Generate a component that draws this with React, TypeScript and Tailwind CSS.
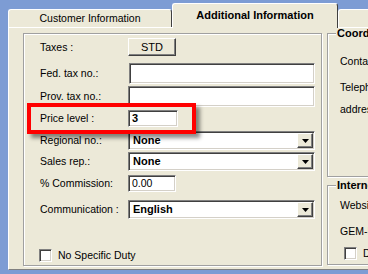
import React from 'react';

const sunken =
  'border border-t-[#808080] border-l-[#808080] border-r-white border-b-white shadow-[inset_1px_1px_0_#404040,inset_-1px_-1px_0_#d4d0c8] bg-white';
const raised =
  'border border-t-white border-l-white border-r-[#404040] border-b-[#404040] shadow-[inset_-1px_-1px_0_#808080] bg-[#ece9d8]';
const groupBox =
  'relative border border-[#a0a0a0] shadow-[inset_1px_1px_0_#ffffff,1px_1px_0_#ffffff]';

function Select({ value }: { value: string }) {
  return (
    <div className={`${sunken} w-[187px] h-[19px] flex items-center pl-[4px] pr-[1px]`}>
      <span className="flex-1 font-bold text-[11px]">{value}</span>
      <div className={`${raised} w-[16px] h-[15px] flex items-center justify-center`}>
        <svg width="7" height="4" viewBox="0 0 7 4">
          <path d="M0 0h7L3.5 4z" fill="#000" />
        </svg>
      </div>
    </div>
  );
}

function Row({ label, mt, children }: { label: string; mt: string; children: React.ReactNode }) {
  return (
    <div className={`flex items-center ${mt}`}>
      <span className="w-[88px] shrink-0">{label}</span>
      {children}
    </div>
  );
}

// Customer card - "Additional Information" tab with price level highlighted
export default function App() {
  return (
    <div className="relative w-[368px] h-[274px] overflow-hidden bg-[#7d9cd4] pl-[8px] pt-[3px] text-[10.5px] leading-none text-black font-['Liberation_Sans',Arial,sans-serif]">
      <div className="flex flex-col h-[267px] w-[400px]">
        {/* tabs */}
        <div className="flex items-end h-[24px]">
          <div className="w-[164px] h-[18px] bg-[#ece9d8] border-t border-l border-white border-r border-r-[#404040] rounded-t-[3px] flex items-center justify-center">
            Customer Information
          </div>
          <div className="relative z-10 -mb-px w-[166px] h-[25px] bg-[#ece9d8] border-t border-l border-white border-r border-r-[#404040] rounded-t-[3px] flex items-center justify-center pb-[2px] font-bold text-[11px]">
            Additional Information
          </div>
          <div className="flex-1 h-[18px] bg-[#ece9d8] border-t border-l border-white rounded-tl-[3px]" />
        </div>

        {/* panel */}
        <div className="flex-1 flex gap-[5px] bg-[#ece9d8] border-t border-l border-white border-b border-b-[#808080] pl-[14px] pt-[5px]">
          <div className={`${groupBox} w-[299px] h-[233px] shrink-0 pl-[16px]`}>
            <Row label="Taxes :" mt="mt-[4px]">
              <div className={`${raised} w-[48px] h-[18px] flex items-center justify-center text-[11px]`}>STD</div>
            </Row>
            <Row label="Fed. tax no.:" mt="mt-[7px]">
              <div className={`${sunken} ml-px w-[186px] h-[21px]`} />
            </Row>
            <Row label="Prov. tax no.:" mt="mt-[2px]">
              <div className={`${sunken} w-[187px] h-[21px]`} />
            </Row>
            <Row label="Price level :" mt="mt-[3px]">
              <div className={`${sunken} w-[50px] h-[17px] flex items-center pl-[3px] font-bold text-[11px]`}>3</div>
            </Row>
            <Row label="Regional no.:" mt="mt-[4px]">
              <Select value="None" />
            </Row>
            <Row label="Sales rep.:" mt="mt-[2px]">
              <Select value="None" />
            </Row>
            <Row label="% Commission:" mt="mt-[4px]">
              <div className={`${sunken} w-[48px] h-[17px] flex items-center pl-[3px]`}>0.00</div>
            </Row>
            <Row label="Communication :" mt="mt-[8px]">
              <Select value="English" />
            </Row>
            <div className="flex items-center gap-[6px] mt-[30px] -ml-px">
              <div className={`${sunken} w-[13px] h-[13px]`} />
              <span>No Specific Duty</span>
            </div>
          </div>

          <div className="flex flex-col gap-[8px] w-[100px] shrink-0">
            <div className={`${groupBox} h-[144px] pl-[12px]`}>
              <span className="absolute -top-[6px] left-[8px] px-px bg-[#ece9d8] font-bold text-[11px]">Coordinates</span>
              <div className="mt-[22px]">Contact</div>
              <div className="mt-[15px]">Telephone</div>
              <div className="mt-[12px]">address</div>
            </div>
            <div className={`${groupBox} h-[80px] pl-[12px]`}>
              <span className="absolute -top-[6px] left-[8px] px-px bg-[#ece9d8] font-bold text-[11px]">Internet</span>
              <div className="mt-[14px]">Website</div>
              <div className="mt-[15px]">GEM-ID</div>
              <div className="flex items-center gap-[6px] mt-[11px] ml-[4px]">
                <div className={`${sunken} w-[13px] h-[13px]`} />
                <span>Default</span>
              </div>
            </div>
          </div>
        </div>
      </div>

      {/* highlight marker */}
      <div className="absolute left-[27px] top-[103px] w-[169px] h-[31px] border-[4px] border-[#ff0000] shadow-[4px_4px_4px_rgba(0,0,0,0.45)]" />
    </div>
  );
}
